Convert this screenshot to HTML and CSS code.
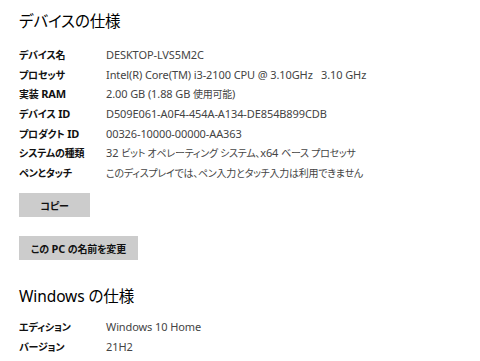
FILE: index.html
```html
<!DOCTYPE html>
<html lang="ja">
<head>
<meta charset="utf-8">
<link rel="stylesheet" href="styles.css">
</head>
<body>
<div class="page">
  <h2 class="title">デバイスの仕様</h2>
  <dl class="specs">
    <dt><span class="j">デバイス名</span></dt><dd>DESKTOP-LVS5M2C</dd>
    <dt><span class="j">プロセッサ</span></dt><dd>Intel(R) Core(TM) i3-2100 CPU @ 3.10GHz&nbsp;&nbsp; 3.10 GHz</dd>
    <dt><span class="j">実装</span> RAM</dt><dd>2.00 GB (1.88 GB <span class="j">使用可能</span>)</dd>
    <dt><span class="j">デバイス</span> ID</dt><dd>D509E061-A0F4-454A-A134-DE854B899CDB</dd>
    <dt><span class="j">プロダクト</span> ID</dt><dd>00326-10000-00000-AA363</dd>
    <dt><span class="j">システムの種類</span></dt><dd>32 <span class="j">ビット オペレーティング システム、</span>x64 <span class="j">ベース プロセッサ</span></dd>
    <dt><span class="j">ペンとタッチ</span></dt><dd><span class="j">このディスプレイでは、ペン入力とタッチ入力は利用できません</span></dd>
  </dl>
  <button class="btn btn-copy"><span class="j">コピー</span></button>
  <button class="btn btn-rename"><span class="j">この</span> PC <span class="j">の名前を変更</span></button>
  <h2 class="title title-win">Windows の仕様</h2>
  <dl class="specs specs-win">
    <dt><span class="j">エディション</span></dt><dd>Windows 10 Home</dd>
    <dt><span class="j">バージョン</span></dt><dd>21H2</dd>
  </dl>
</div>
</body>
</html>
```
FILE: styles.css
```css
html, body {
  margin: 0;
  padding: 0;
  background: #fff;
}
body {
  font-family: "Noto Sans", "Noto Sans CJK JP", sans-serif;
  color: #000;
}
.page {
  padding: 9px 0 0 19px;
  display: flex;
  flex-direction: column;
  align-items: flex-start;
}
.title {
  margin: 0;
  font-size: 15.5px;
  font-weight: 400;
  line-height: 24px;
  letter-spacing: -0.1px;
  font-feature-settings: "palt";
}
.j {
  font-size: 10px;
  font-feature-settings: "palt";
}
.specs {
  margin: 12px 0 0 0;
  display: grid;
  grid-template-columns: 87px auto;
  grid-auto-rows: 19.6px;
  font-size: 11px;
  align-items: center;
}
.specs dt {
  font-weight: 700;
  color: #111;
  letter-spacing: -0.2px;
}
.specs dd {
  margin: 0;
  color: #444;
  white-space: nowrap;
  letter-spacing: -0.1px;
}
.specs dd .j {
  letter-spacing: -0.25px;
}
.btn {
  border: 0;
  background: #cccccc;
  font-family: inherit;
  font-size: 11px;
  font-weight: 700;
  color: #111;
  height: 24px;
  padding: 0;
  letter-spacing: -0.2px;
}
.btn-copy {
  width: 71px;
  margin-top: 11px;
}
.btn-rename {
  width: 119px;
  margin-top: 19px;
}
.title-win {
  margin-top: 24px;
}
.specs-win {
  margin-top: 9px;
}
```
